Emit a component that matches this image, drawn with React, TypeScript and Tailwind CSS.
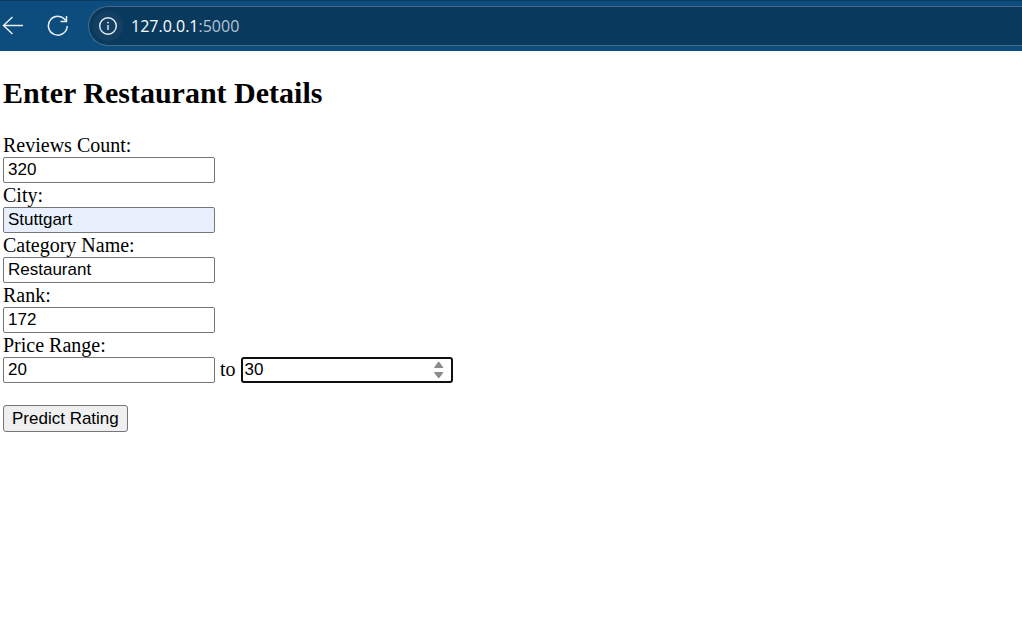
import React from "react";

const inputBase =
  "block h-[26px] w-[212px] rounded-[2px] border border-[#767676] bg-white px-1 text-[17px] leading-5 text-black outline-none [appearance:textfield] [&::-webkit-inner-spin-button]:appearance-none";

type FieldProps = {
  id: string;
  label: string;
  value: string;
  type?: string;
  filled?: boolean;
};

function Field({ id, label, value, type = "text", filled = false }: FieldProps) {
  return (
    <div>
      <Label htmlFor={id}>{label}</Label>
      <input
        id={id}
        name={id}
        type={type}
        defaultValue={value}
        className={`${inputBase} font-['Liberation_Sans',sans-serif] ${filled ? "bg-[#e8f0fe]!" : ""}`}
      />
    </div>
  );
}

function Label({ htmlFor, children }: { htmlFor: string; children: React.ReactNode }) {
  return (
    <label htmlFor={htmlFor} className="block h-6 text-[20px] leading-6">
      {children}
    </label>
  );
}

function BrowserBar() {
  return (
    <header className="flex h-[51px] items-center border-t border-[#083c63] bg-[#0c4d7d] text-[#e8eef4]">
      <button type="button" aria-label="Back" className="ml-[2px] block">
        <svg width="22" height="22" viewBox="0 0 22 22" fill="none" stroke="currentColor" strokeWidth="1.5">
          <path d="M21 10.5H1.5M10.5 2L1.5 10.5L10.5 19" />
        </svg>
      </button>
      <button type="button" aria-label="Reload" className="ml-[23px] block">
        <svg width="22" height="22" viewBox="0 0 22 22" fill="none" stroke="currentColor" strokeWidth="1.5">
          <path d="M19.2 6.5A9.4 9.4 0 1 0 20.2 11" />
          <path d="M19.5 1V6.5H13.5" />
        </svg>
      </button>
      <div className="ml-[19px] flex h-10 flex-1 items-center rounded-l-full border border-r-0 border-[#466b89] bg-[#093a5e] pl-1">
        <button
          type="button"
          aria-label="Site information"
          className="flex size-[30px] items-center justify-center rounded-full bg-[#134062]"
        >
          <svg width="20" height="20" viewBox="0 0 20 20" fill="none" stroke="currentColor" strokeWidth="1.4">
            <circle cx="10" cy="10" r="8.3" />
            <path d="M10 9V14" />
            <circle cx="10" cy="6.6" r="0.9" fill="currentColor" stroke="none" />
          </svg>
        </button>
        <span className="ml-2 font-['Open_Sans','Noto_Sans',sans-serif] text-[16px] leading-6 text-white">
          127.0.0.1<span className="text-[#b4c4d2]">:5000</span>
        </span>
      </div>
    </header>
  );
}

export default function App() {
  return (
    <div className="min-h-screen bg-white font-['Liberation_Serif',serif] text-black">
      <BrowserBar />
      <main className="px-[3px] pt-6">
        <h2 className="text-[30px] leading-9 font-bold">Enter Restaurant Details</h2>
        <form className="mt-[22px]" onSubmit={(e) => e.preventDefault()}>
          <Field id="reviews" label="Reviews Count:" value="320" type="number" />
          <Field id="city" label="City:" value="Stuttgart" filled />
          <Field id="category" label="Category Name:" value="Restaurant" />
          <Field id="rank" label="Rank:" value="172" type="number" />
          <Label htmlFor="price-min">Price Range:</Label>
          <div className="flex items-start gap-[5px]">
            <input
              id="price-min"
              name="price-min"
              type="number"
              defaultValue="20"
              className={`${inputBase} font-['Liberation_Sans',sans-serif]`}
            />
            <label htmlFor="price-max" className="text-[20px] leading-6">
              to
            </label>
            <div className="relative">
              <input
                id="price-max"
                name="price-max"
                type="number"
                defaultValue="30"
                className={`${inputBase} rounded-[3px]! border-2! border-[#101010]! px-[2px]! font-['Liberation_Sans',sans-serif]`}
              />
              <svg
                className="pointer-events-none absolute top-1 right-2 text-[#8b8b8b]"
                width="12"
                height="18"
                viewBox="0 0 12 18"
                fill="currentColor"
                aria-hidden="true"
              >
                <path d="M5 1.3Q5.7 .4 6.4 1.3L10.2 6.2Q10.4 7 9.7 7H1.7Q1 7 1.2 6.2Z" />
                <path d="M5 16.7Q5.7 17.6 6.4 16.7L10.2 11.8Q10.4 11 9.7 11H1.7Q1 11 1.2 11.8Z" />
              </svg>
            </div>
          </div>
          <button
            type="submit"
            className="mt-[22px] block h-[27px] rounded-[3px] border border-[#767676] bg-[#efefef] px-2 font-['Liberation_Sans',sans-serif] text-[17px] leading-5"
          >
            Predict Rating
          </button>
        </form>
      </main>
    </div>
  );
}
